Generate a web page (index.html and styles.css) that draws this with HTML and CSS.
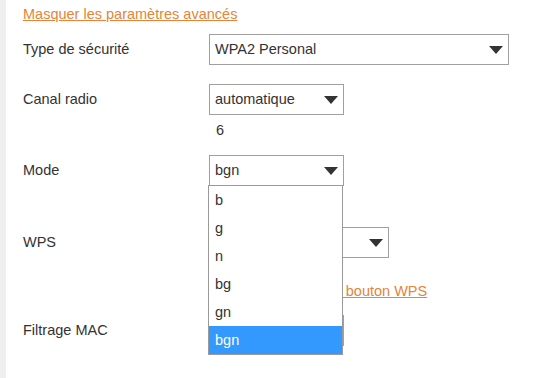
FILE: index.html
```html
<!DOCTYPE html>
<html lang="fr">
<head>
    <meta charset="UTF-8">
    <meta name="viewport" content="width=device-width, initial-scale=1.0">
    <title>Paramètres Wi-Fi avancés</title>
    <link rel="stylesheet" href="styles.css">
</head>
<body>
    <div class="page">
        <div class="sidebar"></div>

        <div class="content">
            <a href="#" class="link toggle">Masquer les paramètres avancés</a>

            <div class="row row-security">
                <div class="label">Type de sécurité</div>
                <div class="field">
                    <div class="select select-wide">WPA2 Personal<span class="caret"></span></div>
                </div>
            </div>

            <div class="row row-channel">
                <div class="label">Canal radio</div>
                <div class="field">
                    <div class="select">automatique<span class="caret"></span></div>
                    <div class="note">6</div>
                </div>
            </div>

            <div class="row row-mode">
                <div class="label">Mode</div>
                <div class="field">
                    <div class="select">bgn<span class="caret"></span></div>
                    <!-- open dropdown list, lies over the rows below -->
                    <ul class="options">
                        <li>b</li>
                        <li>g</li>
                        <li>n</li>
                        <li>bg</li>
                        <li>gn</li>
                        <li class="selected">bgn</li>
                    </ul>
                </div>
            </div>

            <div class="row row-wps">
                <div class="label">WPS</div>
                <div class="field">
                    <div class="select select-mid"><span class="caret"></span></div>
                    <a href="#" class="link wps-link"><span class="hidden-part">Se connecter par le</span> bouton WPS</a>
                </div>
            </div>

            <div class="row row-mac">
                <div class="label">Filtrage MAC</div>
                <div class="field">
                    <div class="select"><span class="caret"></span></div>
                </div>
            </div>
        </div>
    </div>
</body>
</html>
```

FILE: styles.css
```css
/* Base */
body {
    margin: 0;
    font-family: "Liberation Sans", Arial, sans-serif;
    font-size: 14.5px;
    color: #333;
    background: #fff;
}

.page {
    display: flex;
    height: 378px;
    overflow: hidden;
}

/* Grey strip on the left edge */
.sidebar {
    width: 6px;
    background-color: #efefef;
    flex-shrink: 0;
}

.content {
    flex: 1;
    padding: 6px 0 0 17px;
}

/* Orange links */
.link {
    color: #e5843a;
    text-decoration: underline;
    line-height: 17px;
}

.toggle {
    display: block;
}

/* Form rows */
.row {
    display: flex;
    align-items: flex-start;
}

.label {
    width: 186px;
    line-height: 31px;
}

.field {
    position: relative;
}

.row-security { margin-top: 11px; }
.row-channel  { margin-top: 19px; }
.row-mode     { margin-top: 16px; }
.row-wps      { margin-top: 41px; }
.row-mac      { margin-top: 15px; }

/* Select boxes */
.select {
    position: relative;
    box-sizing: border-box;
    width: 135px;
    height: 31px;
    line-height: 29px;
    padding-left: 5px;
    border: 1px solid #a0a0a0;
    background: #fff;
}

.select-wide {
    width: 300px;
}

.select-mid {
    width: 180px;
}

.caret {
    position: absolute;
    right: 5px;
    top: 11px;
    width: 0;
    height: 0;
    border-left: 7.5px solid transparent;
    border-right: 7.5px solid transparent;
    border-top: 8px solid #333;
}

.note {
    line-height: 17px;
    margin-top: 7px;
    padding-left: 7px;
}

.wps-link {
    display: block;
    margin-top: 25px;
    padding-left: 7px;
    white-space: nowrap;
}

/* the start of the link sits under the open dropdown */
.wps-link .hidden-part {
    visibility: hidden;
}

/* Open dropdown of the Mode select */
.options {
    position: absolute;
    top: 30px;
    left: -1px;
    z-index: 2;
    width: 135px;
    box-sizing: border-box;
    margin: 0;
    padding: 0;
    list-style: none;
    background: #fff;
    border: 1px solid #9a9a9a;
}

.options li {
    height: 28px;
    line-height: 28px;
    padding-left: 6px;
}

.options li.selected {
    background-color: #3399ff;
    color: #fff;
}
```
